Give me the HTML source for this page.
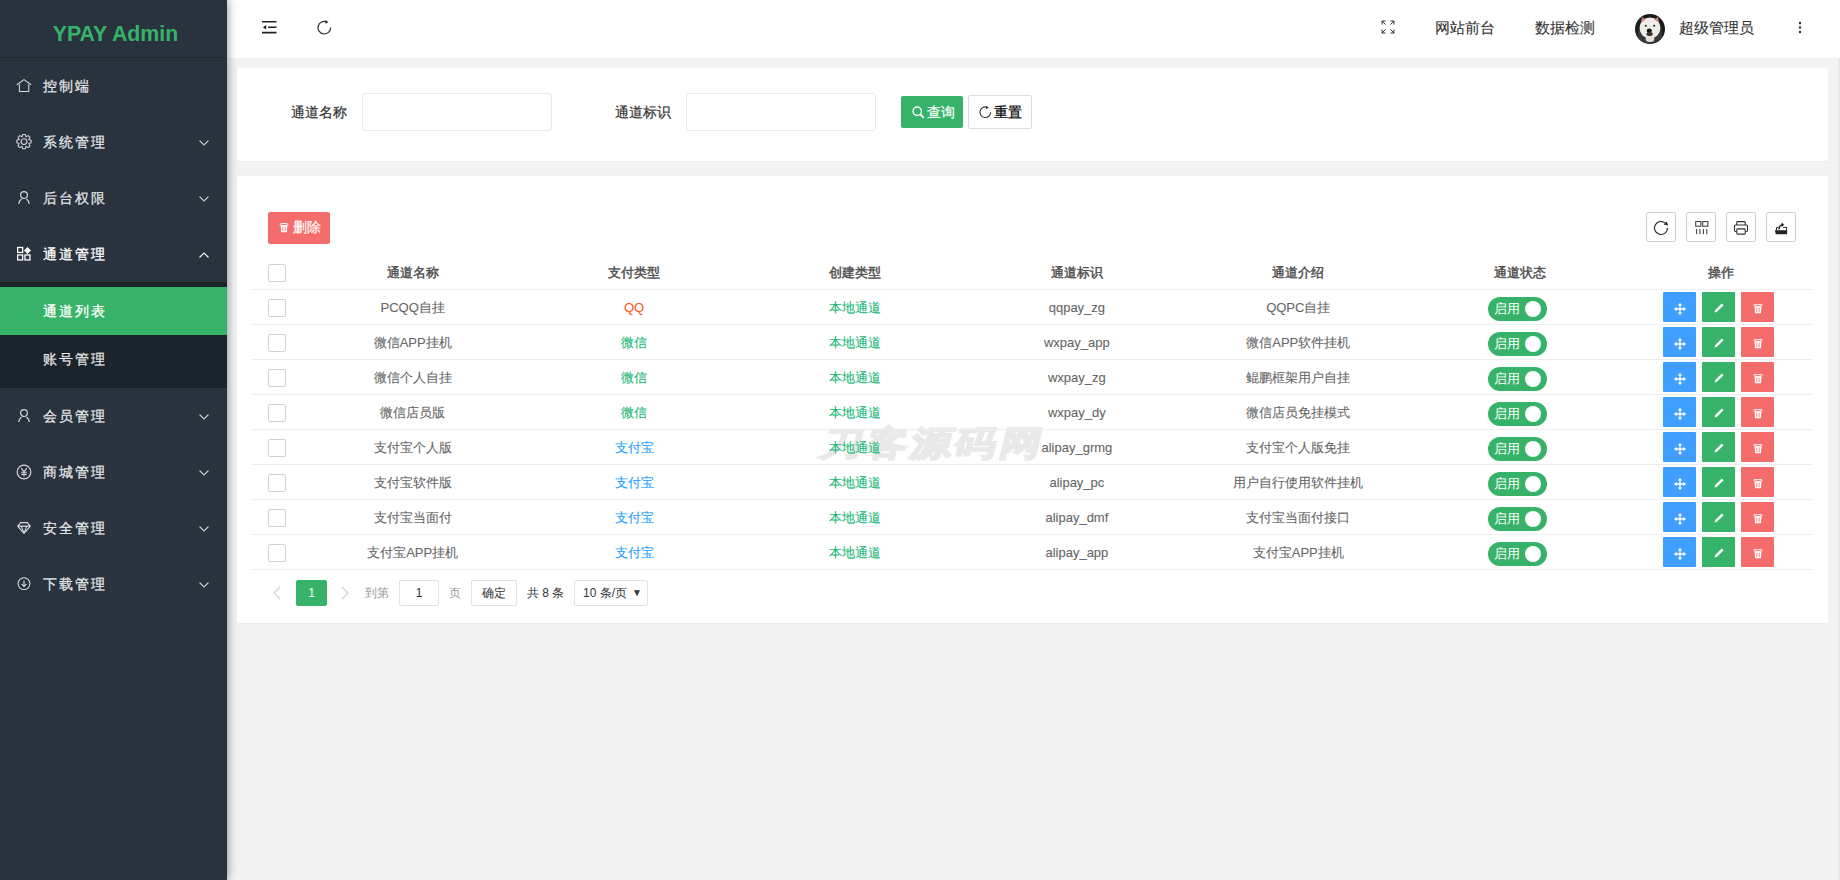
<!DOCTYPE html>
<html><head><meta charset="utf-8">
<style>
*{margin:0;padding:0;box-sizing:border-box}
html,body{width:1840px;height:880px;overflow:hidden;background:#f3f3f3;font-family:"Liberation Sans",sans-serif;font-size:14px;color:#666}
.side{position:absolute;left:0;top:0;width:227px;height:880px;background:#28333e;box-shadow:2px 0 8px rgba(0,21,41,.35);z-index:5}
.logo{height:58px;border-bottom:1px solid rgba(0,0,0,.15);text-align:center;line-height:58px;padding-top:5px;padding-left:4px;color:#36b368;font-weight:bold;font-size:21.3px}
.nav a{position:absolute;left:0;width:227px;height:56px;line-height:56px;color:rgba(255,255,255,.82);text-decoration:none}
.nav a .t{position:absolute;left:43px;top:0;letter-spacing:2px;-webkit-text-stroke:.3px currentColor}
.nav a svg.ic{position:absolute;left:16px;top:20px}
.nav a svg.ar{position:absolute;left:198px;top:24px}
.sub{position:absolute;left:0;top:282px;width:227px;height:106px;background:#1c242b}
.header{position:absolute;left:227px;top:0;width:1613px;height:58px;background:#fff}
.card{position:absolute;background:#fff;border-radius:2px;box-shadow:0 1px 2px rgba(0,0,0,.04)}
.ht{position:absolute;top:0;line-height:56px;font-size:15px;color:#333;white-space:nowrap;-webkit-text-stroke:.1px currentColor}
.lbl{position:absolute;font-size:14px;color:#333;line-height:20px;-webkit-text-stroke:.2px currentColor}
.inp{position:absolute;border:1px solid #eaeaea;border-radius:3px;background:#fff}
.btn{position:absolute;height:32px;line-height:32px;color:#fff;font-size:14px;text-align:center;border-radius:2px;-webkit-text-stroke:.2px currentColor}
.cb{position:absolute;left:268px;width:18px;height:18px;border:1px solid #d2d2d2;border-radius:2px;background:#fff}
.th{position:absolute;text-align:center;font-size:13px;color:#505050;line-height:20px;-webkit-text-stroke:.45px currentColor}
.td{position:absolute;text-align:center;font-size:13px;line-height:20px;white-space:nowrap;-webkit-text-stroke:.1px currentColor}
.hl{position:absolute;left:252px;width:1560px;height:1px;background:#eee}
.sw{position:absolute;left:1488px;width:59px;height:24px;border-radius:12px;background:#36b368;color:#fff;font-size:13px;line-height:24px}
.sw span{position:absolute;left:6px;top:-0.5px}
.sw i{position:absolute;right:6px;top:4px;width:16px;height:16px;border-radius:50%;background:#fff}
.ab{position:absolute;width:33px;height:30px;text-align:center;border-radius:1px;line-height:0}
.pg{position:absolute;height:26px;line-height:25px;border:1px solid #e2e2e2;border-radius:2px;text-align:center;font-size:12px;background:#fff}
.pt{position:absolute;top:583px;font-size:12px;line-height:20px;color:#999;white-space:nowrap}
.wm{position:absolute;left:817px;top:419px;font-size:34px;line-height:48px;font-weight:bold;color:#e9e9e9;-webkit-text-stroke:1.8px #e9e9e9;letter-spacing:3px;white-space:nowrap;transform:skewX(-14deg) scaleX(1.2);transform-origin:0 100%}
</style></head><body>
<div class="side">
  <div class="logo">YPAY Admin</div>

  <div class="nav">
    <a style="top:58px"><svg class="ic" width="16" height="16" viewBox="0 0 16 16"><path d="M0.8 6.8 8 1.6l7.2 5.2M3.4 6.2V13.4H12.7V6.2" fill="none" stroke="#d5d7da" stroke-width="1.05"/></svg><span class="t">控制端</span></a>
    <a style="top:114px"><svg class="ic" width="16" height="16" viewBox="0 0 16 16"><path d="M12.80 5.61L15.19 6.33L15.19 8.87L12.80 9.59L13.98 11.79L12.19 13.58L9.99 12.40L9.27 14.79L6.73 14.79L6.01 12.40L3.81 13.58L2.02 11.79L3.20 9.59L0.81 8.87L0.81 6.33L3.20 5.61L2.02 3.41L3.81 1.62L6.01 2.80L6.73 0.41L9.27 0.41L9.99 2.80L12.19 1.62L13.98 3.41Z" fill="none" stroke="#d5d7da" stroke-width="1.05" stroke-linejoin="round"/><circle cx="8" cy="7.6" r="2.9" fill="none" stroke="#d5d7da" stroke-width="1.1"/></svg><span class="t">系统管理</span><svg class="ar" width="12" height="8" viewBox="0 0 12 8"><path d="M1.5 2.5l4.5 4.5 4.5-4.5" fill="none" stroke="#c9ccd0" stroke-width="1.1"/></svg></a>
    <a style="top:170px"><svg class="ic" width="16" height="16" viewBox="0 0 16 16"><circle cx="8" cy="5.1" r="3.4" fill="none" stroke="#d5d7da" stroke-width="1.2"/><path d="M2.8 14C3 11.6 4.1 10 5.6 9.3M10.4 9.3C11.9 10 13 11.6 13.2 14" fill="none" stroke="#d5d7da" stroke-width="1.2"/></svg><span class="t">后台权限</span><svg class="ar" width="12" height="8" viewBox="0 0 12 8"><path d="M1.5 2.5l4.5 4.5 4.5-4.5" fill="none" stroke="#c9ccd0" stroke-width="1.1"/></svg></a>
    <a style="top:226px;color:#fff"><svg class="ic" width="16" height="16" viewBox="0 0 16 16"><rect x="1.65" y="1.45" width="5" height="5" fill="none" stroke="#fff" stroke-width="1.3"/><rect x="1.65" y="8.95" width="5" height="5" fill="none" stroke="#fff" stroke-width="1.3"/><rect x="8.95" y="8.95" width="5" height="5" fill="none" stroke="#fff" stroke-width="1.3"/><path d="M11.5 0.9l3.5 3.5-3.5 3.5-3.5-3.5z" fill="#fff"/></svg><span class="t">通道管理</span><svg class="ar" style="top:25px" width="12" height="8" viewBox="0 0 12 8"><path d="M1.5 6.5l4.5-4.5 4.5 4.5" fill="none" stroke="#fff" stroke-width="1.1"/></svg></a>
    <div class="sub"></div>
    <a style="top:287px;height:48px;line-height:48px;background:#36b368;color:#fff"><span class="t">通道列表</span></a>
    <a style="top:335px;height:48px;line-height:48px"><span class="t">账号管理</span></a>
    <a style="top:388px"><svg class="ic" width="16" height="16" viewBox="0 0 16 16"><circle cx="8" cy="5.1" r="3.4" fill="none" stroke="#d5d7da" stroke-width="1.2"/><path d="M2.8 14C3 11.6 4.1 10 5.6 9.3M10.4 9.3C11.9 10 13 11.6 13.2 14" fill="none" stroke="#d5d7da" stroke-width="1.2"/></svg><span class="t">会员管理</span><svg class="ar" width="12" height="8" viewBox="0 0 12 8"><path d="M1.5 2.5l4.5 4.5 4.5-4.5" fill="none" stroke="#c9ccd0" stroke-width="1.1"/></svg></a>
    <a style="top:444px"><svg class="ic" width="16" height="16" viewBox="0 0 16 16"><circle cx="8" cy="8" r="6.8" fill="none" stroke="#d5d7da" stroke-width="1.2"/><path d="M5.2 4.2 8 7.6l2.8-3.4M8 7.6V12.6M5.3 8.3h5.4M5.3 10.4h5.4" fill="none" stroke="#d5d7da" stroke-width="1.1"/></svg><span class="t">商城管理</span><svg class="ar" width="12" height="8" viewBox="0 0 12 8"><path d="M1.5 2.5l4.5 4.5 4.5-4.5" fill="none" stroke="#c9ccd0" stroke-width="1.1"/></svg></a>
    <a style="top:500px"><svg class="ic" width="16" height="16" viewBox="0 0 16 16"><path d="M4.6 2.6h6.8l2.9 3.5L8 13.4 1.7 6.1z M1.7 6.1h12.6 M5.3 6.1 8 13.4l2.7-7.3" fill="none" stroke="#d5d7da" stroke-width="1.1" stroke-linejoin="round"/></svg><span class="t">安全管理</span><svg class="ar" width="12" height="8" viewBox="0 0 12 8"><path d="M1.5 2.5l4.5 4.5 4.5-4.5" fill="none" stroke="#c9ccd0" stroke-width="1.1"/></svg></a>
    <a style="top:556px"><svg class="ic" width="16" height="16" viewBox="0 0 16 16"><circle cx="8" cy="7.6" r="5.9" fill="none" stroke="#d5d7da" stroke-width="1.1"/><path d="M8 4.4v6M5.7 8.1 8 10.4l2.3-2.3" fill="none" stroke="#d5d7da" stroke-width="1.1"/></svg><span class="t">下载管理</span><svg class="ar" width="12" height="8" viewBox="0 0 12 8"><path d="M1.5 2.5l4.5 4.5 4.5-4.5" fill="none" stroke="#c9ccd0" stroke-width="1.1"/></svg></a>
  </div>
</div>
<div class="header">
  <svg style="position:absolute;left:35px;top:20px" width="16" height="15" viewBox="0 0 16 15"><path d="M0 1.8h14.5M6 7.2h8.5M0 12.6h14.5" stroke="#222" stroke-width="1.6"/><path d="M0.8 7.2 4.2 4.9v4.6z" fill="#222"/></svg>
  <svg style="position:absolute;left:90px;top:20px" width="16" height="16" viewBox="0 0 16 16"><path d="M13.6 7.6A6.3 6.3 0 1 1 9.8 1.9" fill="none" stroke="#333" stroke-width="1.2"/><path d="M8.3 0l3.2 1.9-3.2 1.9z" fill="#333"/></svg>
  <svg style="position:absolute;left:1154px;top:20px" width="14" height="14" viewBox="0 0 14 14"><g fill="none" stroke="#333" stroke-width="1"><path d="M1 4.5V1h3.5M1 1l3.6 3.6M13 4.5V1H9.5M13 1 9.4 4.6M1 9.5V13h3.5M1 13l3.6-3.6M13 9.5V13H9.5M13 13 9.4 9.4"/></g></svg>
  <span class="ht" style="left:1208px">网站前台</span>
  <span class="ht" style="left:1308px">数据检测</span>
  <svg style="position:absolute;left:1408px;top:14px" width="30" height="30" viewBox="0 0 30 30"><defs><clipPath id="av"><circle cx="15" cy="15" r="15"/></clipPath></defs><g clip-path="url(#av)"><rect width="30" height="30" fill="#1b1b1b"/><path d="M3 30C2 22 3 16 4 14L8 4h14l4 10c1 2 2 8 0 16z" fill="#383838"/><ellipse cx="15" cy="14" rx="10.4" ry="10.6" fill="#efede8"/><path d="M6 8.5 7 3 10.8 5.6z M24 8.5 23 3 19.2 5.6z" fill="#c4877f"/><ellipse cx="10.8" cy="11.8" rx="1.1" ry="1" fill="#2a2a2a"/><ellipse cx="19.2" cy="11.8" rx="1.1" ry="1" fill="#2a2a2a"/><ellipse cx="14.3" cy="16.8" rx="2.6" ry="2.2" fill="#111"/><ellipse cx="14.6" cy="20" rx="3.2" ry="2" fill="#3c3530"/><ellipse cx="15" cy="25" rx="4.4" ry="3" fill="#e4e1dc"/></g></svg>
  <span class="ht" style="left:1452px">超级管理员</span>
  <svg style="position:absolute;left:1571px;top:21px" width="4" height="13" viewBox="0 0 4 13"><circle cx="2" cy="2" r="1.2" fill="#333"/><circle cx="2" cy="6.5" r="1.2" fill="#333"/><circle cx="2" cy="11" r="1.2" fill="#333"/></svg>
</div>
<div class="card" style="left:237px;top:68px;width:1591px;height:93px"></div>
<span class="lbl" style="left:291px;top:102px">通道名称</span>
<div class="inp" style="left:362px;top:93px;width:190px;height:38px"></div>
<span class="lbl" style="left:615px;top:102px">通道标识</span>
<div class="inp" style="left:686px;top:93px;width:190px;height:38px"></div>
<div class="btn" style="left:901px;top:96px;width:62px;background:#36b368"><svg style="position:absolute;left:11px;top:10px" width="13" height="13" viewBox="0 0 13 13"><circle cx="5.2" cy="5.2" r="4.2" fill="none" stroke="#fff" stroke-width="1.3"/><path d="M8.2 8.2l3.6 3.6" stroke="#fff" stroke-width="1.8"/></svg><span style="position:absolute;left:26px;top:0">查询</span></div>
<div class="btn" style="left:968px;top:95px;width:64px;height:34px;line-height:32px;background:#fff;border:1px solid #dcdce6;color:#000"><svg style="position:absolute;left:10px;top:10px" width="13" height="13" viewBox="0 0 13 13"><path d="M11.6 6.3A5.3 5.3 0 1 1 8.2 1.3" fill="none" stroke="#333" stroke-width="1.1"/><path d="M7 0l2.8 1.6L7 3.2z" fill="#333"/></svg><span style="position:absolute;left:25px;top:0">重置</span></div>
<div class="card" style="left:237px;top:176px;width:1591px;height:447px"></div>
<div class="wm">刀客源码网</div>
<div class="btn" style="left:268px;top:212px;width:62px;background:#f56c6c;font-size:13.5px"><svg style="position:absolute;left:11px;top:11px" width="10" height="10" viewBox="0 0 10 10"><ellipse cx="5" cy="1.6" rx="4.2" ry="1.1" fill="none" stroke="#fff" stroke-width="1"/><path d="M1.7 2.8h6.6L7.9 9.2H2.1z" fill="#fff"/><path d="M3.8 3.8v4.4M6.2 3.8v4.4" stroke="#f56c6c" stroke-width=".8"/></svg><span style="position:absolute;left:25px;top:0">删除</span></div>
<svg style="position:absolute;left:1646px;top:212px" width="30" height="30" viewBox="0 0 30 30"><rect x=".5" y=".5" width="29" height="29" rx="2" fill="#fff" stroke="#ccc"/><path d="M21.5 16A6.5 6.5 0 1 1 19.6 11.4" fill="none" stroke="#222" stroke-width="1.15"/><path d="M22 13.6 17.8 12.5 20.9 9.4z" fill="#222"/></svg>
<svg style="position:absolute;left:1686px;top:212px" width="30" height="30" viewBox="0 0 30 30"><rect x=".5" y=".5" width="29" height="29" rx="2" fill="#fff" stroke="#ccc"/><g fill="none" stroke="#333" stroke-width="1"><rect x="9.7" y="9.6" width="5.2" height="4.6"/><rect x="16.7" y="9.6" width="5.2" height="4.6"/></g><path d="M10.6 17v5.2M13.9 17v5.2M17.4 17v5.2M20.8 17v5.2" stroke="#333" stroke-width="1"/></svg>
<svg style="position:absolute;left:1726px;top:212px" width="30" height="30" viewBox="0 0 30 30"><rect x=".5" y=".5" width="29" height="29" rx="2" fill="#fff" stroke="#ccc"/><g fill="none" stroke="#333" stroke-width="1.1"><path d="M10.8 13V10.5q0-.9.9-.9h6.6q.9 0 .9.9V13"/><path d="M10.5 19.5H9.4q-.9 0-.9-.9v-4.6q0-1 1-1h11q1 0 1 1v4.6q0 .9-.9.9h-1.1"/><rect x="10.8" y="16.9" width="8.4" height="5.2" rx=".8"/></g></svg>
<svg style="position:absolute;left:1766px;top:212px" width="30" height="30" viewBox="0 0 30 30"><rect x=".5" y=".5" width="29" height="29" rx="2" fill="#fff" stroke="#ccc"/><path d="M8.8 18.2h12.2v4H9.8z" fill="#222"/><path d="M10.5 18.2v-2.6h2M20.6 22V15.4h-3.5" fill="none" stroke="#222" stroke-width="1"/><path d="M13 17.5c0-2.6 1-4.2 3.2-4.6" fill="none" stroke="#222" stroke-width="1.4"/><path d="M15.6 10.6l2.6 2.2-2.6 2.2z" fill="#222"/></svg>
<div class="cb" style="top:264px"></div>
<div class="th" style="left:302px;width:221.4px;top:263px">通道名称</div>
<div class="th" style="left:523.4px;width:221.4px;top:263px">支付类型</div>
<div class="th" style="left:744.8px;width:221.4px;top:263px">创建类型</div>
<div class="th" style="left:966.2px;width:221.4px;top:263px">通道标识</div>
<div class="th" style="left:1187.6px;width:221.4px;top:263px">通道介绍</div>
<div class="th" style="left:1409px;width:221.4px;top:263px">通道状态</div>
<div class="th" style="left:1630.4px;width:181.6px;top:263px">操作</div>
<div class="hl" style="top:289px"></div>
<div class="hl" style="top:324px"></div>
<div class="hl" style="top:359px"></div>
<div class="hl" style="top:394px"></div>
<div class="hl" style="top:429px"></div>
<div class="hl" style="top:464px"></div>
<div class="hl" style="top:499px"></div>
<div class="hl" style="top:534px"></div>
<div class="hl" style="top:569px"></div>
<div class="cb" style="top:299px"></div>
<div class="td" style="left:302px;width:221.4px;top:298px;color:#666">PCQQ自挂</div>
<div class="td" style="left:523.4px;width:221.4px;top:298px;color:#ff5722">QQ</div>
<div class="td" style="left:744.8px;width:221.4px;top:298px;color:#16b777">本地通道</div>
<div class="td" style="left:966.2px;width:221.4px;top:298px;color:#666">qqpay_zg</div>
<div class="td" style="left:1187.6px;width:221.4px;top:298px;color:#666">QQPC自挂</div>
<div class="sw" style="top:297px"><span>启用</span><i></i></div>
<div class="ab" style="left:1663px;top:292px;background:#409eff"><svg width="12" height="12" viewBox="0 0 12 12" style="margin-top:10.5px;display:inline-block"><path d="M6 1.5v9M1.5 6h9" stroke="#fff" stroke-width="1.3"/><path d="M6 0 3.7 2.6h4.6zM6 12 3.7 9.4h4.6zM0 6 2.6 3.7v4.6zM12 6 9.4 3.7v4.6z" fill="#fff"/></svg></div>
<div class="ab" style="left:1702px;top:292px;background:#36b368"><svg width="12" height="12" viewBox="0 0 12 12" style="margin-top:10px;display:inline-block"><path d="M1.5 10.5 2.2 8 8.8 1.4l1.8 1.8L4 9.8z" fill="#fff"/></svg></div>
<div class="ab" style="left:1741px;top:292px;background:#f56c6c"><svg width="10" height="10" viewBox="0 0 10 10" style="margin-top:11.5px;display:inline-block"><ellipse cx="5" cy="1.3" rx="4.3" ry="1.1" fill="none" stroke="#fff" stroke-width="1"/><path d="M1.6 2.6h6.8L8 9.2H2z" fill="#fff"/><path d="M3.8 3.6v4.6M6.2 3.6v4.6" stroke="#f56c6c" stroke-width=".8"/></svg></div>
<div class="cb" style="top:334px"></div>
<div class="td" style="left:302px;width:221.4px;top:333px;color:#666">微信APP挂机</div>
<div class="td" style="left:523.4px;width:221.4px;top:333px;color:#16b777">微信</div>
<div class="td" style="left:744.8px;width:221.4px;top:333px;color:#16b777">本地通道</div>
<div class="td" style="left:966.2px;width:221.4px;top:333px;color:#666">wxpay_app</div>
<div class="td" style="left:1187.6px;width:221.4px;top:333px;color:#666">微信APP软件挂机</div>
<div class="sw" style="top:332px"><span>启用</span><i></i></div>
<div class="ab" style="left:1663px;top:327px;background:#409eff"><svg width="12" height="12" viewBox="0 0 12 12" style="margin-top:10.5px;display:inline-block"><path d="M6 1.5v9M1.5 6h9" stroke="#fff" stroke-width="1.3"/><path d="M6 0 3.7 2.6h4.6zM6 12 3.7 9.4h4.6zM0 6 2.6 3.7v4.6zM12 6 9.4 3.7v4.6z" fill="#fff"/></svg></div>
<div class="ab" style="left:1702px;top:327px;background:#36b368"><svg width="12" height="12" viewBox="0 0 12 12" style="margin-top:10px;display:inline-block"><path d="M1.5 10.5 2.2 8 8.8 1.4l1.8 1.8L4 9.8z" fill="#fff"/></svg></div>
<div class="ab" style="left:1741px;top:327px;background:#f56c6c"><svg width="10" height="10" viewBox="0 0 10 10" style="margin-top:11.5px;display:inline-block"><ellipse cx="5" cy="1.3" rx="4.3" ry="1.1" fill="none" stroke="#fff" stroke-width="1"/><path d="M1.6 2.6h6.8L8 9.2H2z" fill="#fff"/><path d="M3.8 3.6v4.6M6.2 3.6v4.6" stroke="#f56c6c" stroke-width=".8"/></svg></div>
<div class="cb" style="top:369px"></div>
<div class="td" style="left:302px;width:221.4px;top:368px;color:#666">微信个人自挂</div>
<div class="td" style="left:523.4px;width:221.4px;top:368px;color:#16b777">微信</div>
<div class="td" style="left:744.8px;width:221.4px;top:368px;color:#16b777">本地通道</div>
<div class="td" style="left:966.2px;width:221.4px;top:368px;color:#666">wxpay_zg</div>
<div class="td" style="left:1187.6px;width:221.4px;top:368px;color:#666">鲲鹏框架用户自挂</div>
<div class="sw" style="top:367px"><span>启用</span><i></i></div>
<div class="ab" style="left:1663px;top:362px;background:#409eff"><svg width="12" height="12" viewBox="0 0 12 12" style="margin-top:10.5px;display:inline-block"><path d="M6 1.5v9M1.5 6h9" stroke="#fff" stroke-width="1.3"/><path d="M6 0 3.7 2.6h4.6zM6 12 3.7 9.4h4.6zM0 6 2.6 3.7v4.6zM12 6 9.4 3.7v4.6z" fill="#fff"/></svg></div>
<div class="ab" style="left:1702px;top:362px;background:#36b368"><svg width="12" height="12" viewBox="0 0 12 12" style="margin-top:10px;display:inline-block"><path d="M1.5 10.5 2.2 8 8.8 1.4l1.8 1.8L4 9.8z" fill="#fff"/></svg></div>
<div class="ab" style="left:1741px;top:362px;background:#f56c6c"><svg width="10" height="10" viewBox="0 0 10 10" style="margin-top:11.5px;display:inline-block"><ellipse cx="5" cy="1.3" rx="4.3" ry="1.1" fill="none" stroke="#fff" stroke-width="1"/><path d="M1.6 2.6h6.8L8 9.2H2z" fill="#fff"/><path d="M3.8 3.6v4.6M6.2 3.6v4.6" stroke="#f56c6c" stroke-width=".8"/></svg></div>
<div class="cb" style="top:404px"></div>
<div class="td" style="left:302px;width:221.4px;top:403px;color:#666">微信店员版</div>
<div class="td" style="left:523.4px;width:221.4px;top:403px;color:#16b777">微信</div>
<div class="td" style="left:744.8px;width:221.4px;top:403px;color:#16b777">本地通道</div>
<div class="td" style="left:966.2px;width:221.4px;top:403px;color:#666">wxpay_dy</div>
<div class="td" style="left:1187.6px;width:221.4px;top:403px;color:#666">微信店员免挂模式</div>
<div class="sw" style="top:402px"><span>启用</span><i></i></div>
<div class="ab" style="left:1663px;top:397px;background:#409eff"><svg width="12" height="12" viewBox="0 0 12 12" style="margin-top:10.5px;display:inline-block"><path d="M6 1.5v9M1.5 6h9" stroke="#fff" stroke-width="1.3"/><path d="M6 0 3.7 2.6h4.6zM6 12 3.7 9.4h4.6zM0 6 2.6 3.7v4.6zM12 6 9.4 3.7v4.6z" fill="#fff"/></svg></div>
<div class="ab" style="left:1702px;top:397px;background:#36b368"><svg width="12" height="12" viewBox="0 0 12 12" style="margin-top:10px;display:inline-block"><path d="M1.5 10.5 2.2 8 8.8 1.4l1.8 1.8L4 9.8z" fill="#fff"/></svg></div>
<div class="ab" style="left:1741px;top:397px;background:#f56c6c"><svg width="10" height="10" viewBox="0 0 10 10" style="margin-top:11.5px;display:inline-block"><ellipse cx="5" cy="1.3" rx="4.3" ry="1.1" fill="none" stroke="#fff" stroke-width="1"/><path d="M1.6 2.6h6.8L8 9.2H2z" fill="#fff"/><path d="M3.8 3.6v4.6M6.2 3.6v4.6" stroke="#f56c6c" stroke-width=".8"/></svg></div>
<div class="cb" style="top:439px"></div>
<div class="td" style="left:302px;width:221.4px;top:438px;color:#666">支付宝个人版</div>
<div class="td" style="left:523.4px;width:221.4px;top:438px;color:#1e9fff">支付宝</div>
<div class="td" style="left:744.8px;width:221.4px;top:438px;color:#16b777">本地通道</div>
<div class="td" style="left:966.2px;width:221.4px;top:438px;color:#666">alipay_grmg</div>
<div class="td" style="left:1187.6px;width:221.4px;top:438px;color:#666">支付宝个人版免挂</div>
<div class="sw" style="top:437px"><span>启用</span><i></i></div>
<div class="ab" style="left:1663px;top:432px;background:#409eff"><svg width="12" height="12" viewBox="0 0 12 12" style="margin-top:10.5px;display:inline-block"><path d="M6 1.5v9M1.5 6h9" stroke="#fff" stroke-width="1.3"/><path d="M6 0 3.7 2.6h4.6zM6 12 3.7 9.4h4.6zM0 6 2.6 3.7v4.6zM12 6 9.4 3.7v4.6z" fill="#fff"/></svg></div>
<div class="ab" style="left:1702px;top:432px;background:#36b368"><svg width="12" height="12" viewBox="0 0 12 12" style="margin-top:10px;display:inline-block"><path d="M1.5 10.5 2.2 8 8.8 1.4l1.8 1.8L4 9.8z" fill="#fff"/></svg></div>
<div class="ab" style="left:1741px;top:432px;background:#f56c6c"><svg width="10" height="10" viewBox="0 0 10 10" style="margin-top:11.5px;display:inline-block"><ellipse cx="5" cy="1.3" rx="4.3" ry="1.1" fill="none" stroke="#fff" stroke-width="1"/><path d="M1.6 2.6h6.8L8 9.2H2z" fill="#fff"/><path d="M3.8 3.6v4.6M6.2 3.6v4.6" stroke="#f56c6c" stroke-width=".8"/></svg></div>
<div class="cb" style="top:474px"></div>
<div class="td" style="left:302px;width:221.4px;top:473px;color:#666">支付宝软件版</div>
<div class="td" style="left:523.4px;width:221.4px;top:473px;color:#1e9fff">支付宝</div>
<div class="td" style="left:744.8px;width:221.4px;top:473px;color:#16b777">本地通道</div>
<div class="td" style="left:966.2px;width:221.4px;top:473px;color:#666">alipay_pc</div>
<div class="td" style="left:1187.6px;width:221.4px;top:473px;color:#666">用户自行使用软件挂机</div>
<div class="sw" style="top:472px"><span>启用</span><i></i></div>
<div class="ab" style="left:1663px;top:467px;background:#409eff"><svg width="12" height="12" viewBox="0 0 12 12" style="margin-top:10.5px;display:inline-block"><path d="M6 1.5v9M1.5 6h9" stroke="#fff" stroke-width="1.3"/><path d="M6 0 3.7 2.6h4.6zM6 12 3.7 9.4h4.6zM0 6 2.6 3.7v4.6zM12 6 9.4 3.7v4.6z" fill="#fff"/></svg></div>
<div class="ab" style="left:1702px;top:467px;background:#36b368"><svg width="12" height="12" viewBox="0 0 12 12" style="margin-top:10px;display:inline-block"><path d="M1.5 10.5 2.2 8 8.8 1.4l1.8 1.8L4 9.8z" fill="#fff"/></svg></div>
<div class="ab" style="left:1741px;top:467px;background:#f56c6c"><svg width="10" height="10" viewBox="0 0 10 10" style="margin-top:11.5px;display:inline-block"><ellipse cx="5" cy="1.3" rx="4.3" ry="1.1" fill="none" stroke="#fff" stroke-width="1"/><path d="M1.6 2.6h6.8L8 9.2H2z" fill="#fff"/><path d="M3.8 3.6v4.6M6.2 3.6v4.6" stroke="#f56c6c" stroke-width=".8"/></svg></div>
<div class="cb" style="top:509px"></div>
<div class="td" style="left:302px;width:221.4px;top:508px;color:#666">支付宝当面付</div>
<div class="td" style="left:523.4px;width:221.4px;top:508px;color:#1e9fff">支付宝</div>
<div class="td" style="left:744.8px;width:221.4px;top:508px;color:#16b777">本地通道</div>
<div class="td" style="left:966.2px;width:221.4px;top:508px;color:#666">alipay_dmf</div>
<div class="td" style="left:1187.6px;width:221.4px;top:508px;color:#666">支付宝当面付接口</div>
<div class="sw" style="top:507px"><span>启用</span><i></i></div>
<div class="ab" style="left:1663px;top:502px;background:#409eff"><svg width="12" height="12" viewBox="0 0 12 12" style="margin-top:10.5px;display:inline-block"><path d="M6 1.5v9M1.5 6h9" stroke="#fff" stroke-width="1.3"/><path d="M6 0 3.7 2.6h4.6zM6 12 3.7 9.4h4.6zM0 6 2.6 3.7v4.6zM12 6 9.4 3.7v4.6z" fill="#fff"/></svg></div>
<div class="ab" style="left:1702px;top:502px;background:#36b368"><svg width="12" height="12" viewBox="0 0 12 12" style="margin-top:10px;display:inline-block"><path d="M1.5 10.5 2.2 8 8.8 1.4l1.8 1.8L4 9.8z" fill="#fff"/></svg></div>
<div class="ab" style="left:1741px;top:502px;background:#f56c6c"><svg width="10" height="10" viewBox="0 0 10 10" style="margin-top:11.5px;display:inline-block"><ellipse cx="5" cy="1.3" rx="4.3" ry="1.1" fill="none" stroke="#fff" stroke-width="1"/><path d="M1.6 2.6h6.8L8 9.2H2z" fill="#fff"/><path d="M3.8 3.6v4.6M6.2 3.6v4.6" stroke="#f56c6c" stroke-width=".8"/></svg></div>
<div class="cb" style="top:544px"></div>
<div class="td" style="left:302px;width:221.4px;top:543px;color:#666">支付宝APP挂机</div>
<div class="td" style="left:523.4px;width:221.4px;top:543px;color:#1e9fff">支付宝</div>
<div class="td" style="left:744.8px;width:221.4px;top:543px;color:#16b777">本地通道</div>
<div class="td" style="left:966.2px;width:221.4px;top:543px;color:#666">alipay_app</div>
<div class="td" style="left:1187.6px;width:221.4px;top:543px;color:#666">支付宝APP挂机</div>
<div class="sw" style="top:542px"><span>启用</span><i></i></div>
<div class="ab" style="left:1663px;top:537px;background:#409eff"><svg width="12" height="12" viewBox="0 0 12 12" style="margin-top:10.5px;display:inline-block"><path d="M6 1.5v9M1.5 6h9" stroke="#fff" stroke-width="1.3"/><path d="M6 0 3.7 2.6h4.6zM6 12 3.7 9.4h4.6zM0 6 2.6 3.7v4.6zM12 6 9.4 3.7v4.6z" fill="#fff"/></svg></div>
<div class="ab" style="left:1702px;top:537px;background:#36b368"><svg width="12" height="12" viewBox="0 0 12 12" style="margin-top:10px;display:inline-block"><path d="M1.5 10.5 2.2 8 8.8 1.4l1.8 1.8L4 9.8z" fill="#fff"/></svg></div>
<div class="ab" style="left:1741px;top:537px;background:#f56c6c"><svg width="10" height="10" viewBox="0 0 10 10" style="margin-top:11.5px;display:inline-block"><ellipse cx="5" cy="1.3" rx="4.3" ry="1.1" fill="none" stroke="#fff" stroke-width="1"/><path d="M1.6 2.6h6.8L8 9.2H2z" fill="#fff"/><path d="M3.8 3.6v4.6M6.2 3.6v4.6" stroke="#f56c6c" stroke-width=".8"/></svg></div>
<svg style="position:absolute;left:272px;top:586px" width="10" height="14" viewBox="0 0 10 14"><path d="M8 1 2 7l6 6" fill="none" stroke="#d2d2d2" stroke-width="1.2"/></svg>
<div class="pg" style="left:296px;top:580px;width:31px;background:#36b368;color:#fff;border-color:#36b368">1</div>
<svg style="position:absolute;left:340px;top:586px" width="10" height="14" viewBox="0 0 10 14"><path d="M2 1l6 6-6 6" fill="none" stroke="#d2d2d2" stroke-width="1.2"/></svg>
<span class="pt" style="left:365px">到第</span>
<div class="pg" style="left:399px;top:580px;width:40px;color:#333">1</div>
<span class="pt" style="left:449px">页</span>
<div class="pg" style="left:471px;top:580px;width:46px;color:#333">确定</div>
<span class="pt" style="left:527px;color:#333">共 8 条</span>
<div class="pg" style="left:574px;top:580px;width:74px;color:#333;text-align:left;padding-left:8px">10 条/页<span style="position:absolute;right:5px;top:-1px;font-size:10px">▼</span></div>
<div style="position:absolute;left:1838px;top:58px;width:2px;height:822px;background:#e8e8e8"></div>
</body></html>
